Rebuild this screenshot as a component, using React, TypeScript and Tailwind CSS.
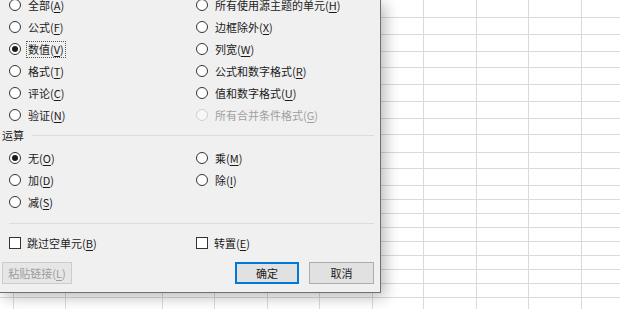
import { ReactNode } from 'react'

const FONT = '"Microsoft YaHei", "Noto Sans CJK SC", "Noto Sans", sans-serif'

// 背景表格：列右边线位置与行高取自截图
const colWidths = [14, 52, 97, 52, 53, 52, 53, 51, 53, 52, 53, 39]
const rowHeights = [18, 17, 17, 16, 17, 17, 17, 16, 18, 16, 17, 14, 14, 14, 14, 14, 14, 14, 14, 12]

function Label({ text, accel, disabled = false }: { text: string; accel: string; disabled?: boolean }) {
  return (
    <span className={disabled ? 'text-[#a0a0a0]' : 'text-[#1b1b1b]'}>
      {text}(<u className="underline-offset-2">{accel}</u>)
    </span>
  )
}

function Radio({
  text,
  accel,
  checked = false,
  disabled = false,
  focused = false
}: {
  text: string
  accel: string
  checked?: boolean
  disabled?: boolean
  focused?: boolean
}) {
  return (
    <div className="flex items-center h-[22px]">
      <span
        className={
          'w-[12px] h-[12px] rounded-full border flex items-center justify-center shrink-0 ' +
          (disabled ? 'border-[#cfcfcf] bg-[#f7f7f7]' : 'border-[#333333] bg-white')
        }
      >
        {checked && <span className="w-[6px] h-[6px] rounded-full bg-[#1b1b1b]" />}
      </span>
      <span
        className={
          'ml-[5px] px-[1px] leading-[15px] ' +
          (focused ? 'border border-dotted border-[#555]' : 'border border-transparent')
        }
      >
        <Label text={text} accel={accel} disabled={disabled} />
      </span>
    </div>
  )
}

function Checkbox({ text, accel }: { text: string; accel: string }) {
  return (
    <div className="flex items-center h-[22px]">
      <span className="w-[12px] h-[12px] border border-[#333333] bg-white shrink-0" />
      <span className="ml-[6px]">
        <Label text={text} accel={accel} />
      </span>
    </div>
  )
}

function Button({ children, primary = false, disabled = false, w }: { children: ReactNode; primary?: boolean; disabled?: boolean; w: string }) {
  return (
    <div
      className={
        'h-[22px] flex items-center justify-center ' +
        w +
        ' ' +
        (disabled
          ? 'bg-[#e6e6e6] border border-[#cccccc] text-[#9d9d9d]'
          : primary
            ? 'bg-[#e1e1e1] border-2 border-[#0078d7] text-[#1b1b1b]'
            : 'bg-[#e1e1e1] border border-[#adadad] text-[#1b1b1b]')
      }
    >
      {children}
    </div>
  )
}

export default function App() {
  return (
    <div className="relative w-[620px] h-[309px] overflow-hidden bg-white" style={{ fontFamily: FONT }}>
      {/* 工作表网格 */}
      <div className="flex flex-col">
        {rowHeights.map((h, r) => (
          <div key={r} className="flex" style={{ height: h }}>
            {colWidths.map((w, c) => (
              <div
                key={c}
                className="border-r border-b border-[#dadada] shrink-0"
                style={{ width: w }}
              />
            ))}
          </div>
        ))}
      </div>

      {/* 选择性粘贴对话框 */}
      <div className="absolute left-0 top-0 w-[381px] h-[293px] bg-[#f0f0f0] border-r border-b border-[#707070] shadow-[4px_4px_14px_rgba(0,0,0,0.28)] text-[11px] pl-[2px] pr-[6px]">
        <div className="-mt-[6px] ml-[7px] grid grid-cols-[187px_1fr]">
          <div>
            <Radio text="全部" accel="A" />
            <Radio text="公式" accel="F" />
            <Radio text="数值" accel="V" checked focused />
            <Radio text="格式" accel="T" />
            <Radio text="评论" accel="C" />
            <Radio text="验证" accel="N" />
          </div>
          <div>
            <Radio text="所有使用源主题的单元" accel="H" />
            <Radio text="边框除外" accel="X" />
            <Radio text="列宽" accel="W" />
            <Radio text="公式和数字格式" accel="R" />
            <Radio text="值和数字格式" accel="U" />
            <Radio text="所有合并条件格式" accel="G" disabled />
          </div>
        </div>

        <div className="flex items-center h-[16px] mt-[1px]">
          <span className="text-[#1b1b1b]">运算</span>
          <div className="flex-1 ml-[8px] h-px bg-[#dcdcdc]" />
        </div>

        <div className="mt-[4px] ml-[7px] grid grid-cols-[187px_1fr]">
          <div>
            <Radio text="无" accel="O" checked />
            <Radio text="加" accel="D" />
            <Radio text="减" accel="S" />
          </div>
          <div>
            <Radio text="乘" accel="M" />
            <Radio text="除" accel="I" />
          </div>
        </div>

        <div className="ml-[7px] mt-[10px] h-px bg-[#dcdcdc]" />

        <div className="mt-[8px] ml-[7px] grid grid-cols-[187px_1fr]">
          <Checkbox text="跳过空单元" accel="B" />
          <Checkbox text="转置" accel="E" />
        </div>

        <div className="mt-[8px] flex items-center">
          <Button w="w-[70px]" disabled>
            粘贴链接(<u className="underline-offset-2">L</u>)
          </Button>
          <div className="flex-1" />
          <Button w="w-[64px]" primary>
            确定
          </Button>
          <div className="w-[10px]" />
          <Button w="w-[65px]">取消</Button>
        </div>
      </div>
    </div>
  )
}
